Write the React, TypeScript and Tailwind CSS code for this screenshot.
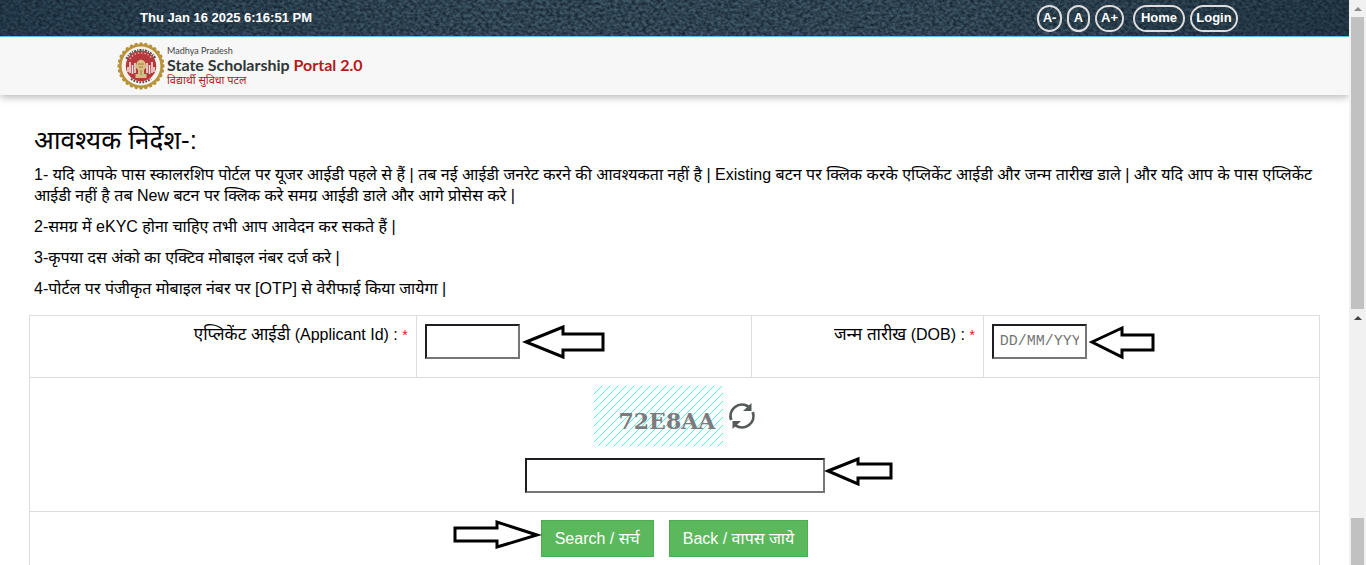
import React from "react";

const latin = "font-['Liberation_Sans','Noto_Sans_Devanagari','Noto_Sans',sans-serif]";
const pill =
  "flex h-[27px] items-center justify-center rounded-full border-2 border-[#dcdcdc] text-[13px] font-bold text-white";
const field =
  "h-[35px] border-2 border-t-[#1d1f23] border-l-[#1d1f23] border-r-[#767676] border-b-[#767676] bg-white px-1.5 font-['Liberation_Mono',monospace] text-[15px] placeholder:text-[#757575]";

function Texture() {
  return (
    <svg className="absolute inset-0 h-full w-full" aria-hidden="true">
      <defs>
        <linearGradient id="slate" x1="0" x2="1" y1="0" y2="0">
          <stop offset="0" stopColor="#2c4658" />
          <stop offset="0.35" stopColor="#415a69" />
          <stop offset="0.7" stopColor="#415a69" />
          <stop offset="1" stopColor="#2a4150" />
        </linearGradient>
        <filter id="grain" x="0" y="0" width="100%" height="100%" colorInterpolationFilters="sRGB">
          <feTurbulence type="fractalNoise" baseFrequency="0.28 0.34" numOctaves="3" seed="7" />
          <feColorMatrix values="0 0 0 0 0.07  0 0 0 0 0.12  0 0 0 0 0.17  1.6 0 0 0 -0.4" />
        </filter>
      </defs>
      <rect width="100%" height="100%" fill="url(#slate)" />
      <rect width="100%" height="100%" filter="url(#grain)" />
    </svg>
  );
}

function Seal() {
  const teeth = Array.from({ length: 28 }, (_, i) => (i * 360) / 28);
  return (
    <svg viewBox="0 0 48 48" className="h-12 w-12 shrink-0" aria-hidden="true">
      {teeth.map((a) => (
        <circle key={a} cx="24" cy="2.2" r="1.9" fill="#b8923a" transform={`rotate(${a} 24 24)`} />
      ))}
      <circle cx="24" cy="24" r="22" fill="#b8923a" />
      <circle cx="24" cy="24" r="19.4" fill="#f6f1ea" />
      <path d="M9.500 17A16.300 16.300 0 0 1 38.500 17" fill="none" stroke="#5b5254" strokeWidth="2.400" strokeDasharray="2.200 1 1.200 1" />
      <path d="M14 36.800A16.300 16.300 0 0 0 34 36.800" fill="none" stroke="#5b5254" strokeWidth="2" strokeDasharray="1.800 1.200" />
      <circle cx="24" cy="24" r="15.200" fill="#b5383c" />
      <path d="M13 17c3-5 7-6 11-6s8 1 11 6" fill="none" stroke="#dca39f" strokeWidth="1.600" strokeDasharray="1.500 1.800" />
      <path d="M11 25v5M13 20v11M15.500 23v9M18 21v10M30 21v10M32.500 23v9M35 20v11M37 25v5" stroke="#f3e2de" strokeWidth="1.600" />
      <path d="M20 20q4-5 8 0l1.500 5-2.500 3v4h2.500v4h-11v-4H21v-4l-2.500-3z" fill="#d8bd86" />
      <path d="M21 22h6M22 25h4M24 28v5" stroke="#a57c3c" strokeWidth="1" />
    </svg>
  );
}

function Arrow({ points, className }: { points: string; className: string }) {
  return (
    <svg className={`absolute overflow-visible ${className}`} aria-hidden="true">
      <polygon points={points} fill="none" stroke="#000" strokeWidth="3" />
    </svg>
  );
}

function Refresh() {
  return (
    <svg viewBox="0 0 28 28" className="h-7 w-7" aria-hidden="true">
      <g fill="none" stroke="#555a57" strokeWidth="2.800">
        <path d="M3.200 18A11.500 11.500 0 0 1 20.500 4.600" />
        <path d="M24.800 10A11.500 11.500 0 0 1 7.500 23.400" />
      </g>
      <path d="M23.500 1v8h-8.500z" fill="#555a57" />
      <path d="M4.500 27v-8h8.500z" fill="#555a57" />
    </svg>
  );
}

function Captcha() {
  return (
    <div className="relative h-[60px] w-[129px]">
      <svg className="absolute inset-0 h-full w-full" aria-hidden="true">
        <defs>
          <pattern id="hatch" width="8" height="8" patternUnits="userSpaceOnUse">
            <rect width="8" height="8" fill="#f8fffd" />
            <path d="M-1 9L9 -1M-1 1L1 -1M7 9L9 7" stroke="#5ff0cf" strokeWidth="1" />
          </pattern>
        </defs>
        <rect width="100%" height="100%" fill="url(#hatch)" />
      </svg>
      <span className="relative block pt-5 pl-[25px] font-['DejaVu_Serif',serif] text-[22px] leading-[30px] font-bold text-[#7d7a80]">
        72E8AA
      </span>
    </div>
  );
}

export default function App() {
  return (
    <div className={`flex h-screen overflow-hidden bg-white text-black ${latin}`}>
      <div className="min-w-0 flex-1">
        <header>
          <div className="relative flex h-[37px] items-center justify-between border-b border-[#5bc0de] bg-[#22343f] pr-[111px] pl-[140px]">
            <Texture />
            <time className="relative text-[13px] font-bold text-white">Thu Jan 16 2025 6:16:51 PM</time>
            <nav className="relative flex items-center gap-[5px]">
              <button className={`${pill} w-[25px]`}>A-</button>
              <button className={`${pill} w-[23px]`}>A</button>
              <button className={`${pill} w-[29px]`}>A+</button>
              <a href="#home" className={`${pill} ml-1 w-[52px]`}>Home</a>
              <a href="#login" className={`${pill} w-12`}>Login</a>
            </nav>
          </div>
          <div className="flex h-[58px] items-center bg-[#f7f7f7] pl-[117px] shadow-[0_2px_8px_rgba(0,0,0,0.3)]">
            <Seal />
            <a href="#portal" className="ml-0.5 block font-['Liberation_Sans_Narrow','Lato','Noto_Sans_Devanagari',sans-serif]">
              <span className="block font-['Lato',sans-serif] text-[9px] leading-3 text-[#444]">Madhya Pradesh</span>
              <span className="block text-base leading-4 font-bold text-[#2f3636]">
                State Scholarship <span className="text-[#b8181c]">Portal 2.0</span>
              </span>
              <span className="block text-[11px] leading-[14px] text-[#b8181c]">विद्यार्थी सुविधा पटल</span>
            </a>
          </div>
        </header>

        <main className="px-[29px]">
          <section className="px-[5px] pt-[29px] text-base leading-[21px]">
            <h1 className="mb-2 text-[26px] leading-8">आवश्यक निर्देश-:</h1>
            <p className="mb-2.5">
              1- यदि आपके पास स्कालरशिप पोर्टल पर यूजर आईडी पहले से हैं | तब नई आईडी जनरेट करने की आवश्यकता नहीं है | Existing बटन पर
              क्लिक करके एप्लिकेंट आईडी और जन्म तारीख डाले | और यदि आप के पास एप्लिकेंट आईडी नहीं है तब New बटन पर क्लिक करे समग्र
              आईडी डाले और आगे प्रोसेस करे |
            </p>
            <p className="mb-2.5">2-समग्र में eKYC होना चाहिए तभी आप आवेदन कर सकते हैं |</p>
            <p className="mb-2.5">3-कृपया दस अंको का एक्टिव मोबाइल नंबर दर्ज करे |</p>
            <p className="mb-4">4-पोर्टल पर पंजीकृत मोबाइल नंबर पर [OTP] से वेरीफाई किया जायेगा |</p>
          </section>

          <form className="border border-[#ddd] text-base" onSubmit={(e) => e.preventDefault()}>
            <div className="grid h-[62px] grid-cols-[30%_26%_18%_26%] border-b border-[#ddd]">
              <label htmlFor="applicant" className="border-r border-[#ddd] px-2 pt-2 text-right leading-[21px]">
                <span className="text-[17px]">एप्लिकेंट आईडी</span> (Applicant Id) : <span className="text-sm text-[#d01818]">*</span>
              </label>
              <div className="relative border-r border-[#ddd] p-2">
                <input id="applicant" type="text" className={`${field} w-[95px]`} />
                <Arrow className="top-2 left-[106px] h-9 w-20" points="3,18 40,3 40,10 80,10 80,26 40,26 40,33" />
              </div>
              <label htmlFor="dob" className="border-r border-[#ddd] px-2 pt-2 text-right leading-[21px]">
                <span className="text-[17px]">जन्म तारीख</span> (DOB) : <span className="text-sm text-[#d01818]">*</span>
              </label>
              <div className="relative p-2">
                <input id="dob" type="text" placeholder="DD/MM/YYY" className={`${field} w-[95px]`} />
                <Arrow className="top-2 left-[103px] h-9 w-16" points="5,18 35,4 35,11 66,11 66,26 35,26 35,33" />
              </div>
            </div>

            <div className="flex h-[134px] flex-col items-center border-b border-[#ddd] pt-2">
              <div className="flex items-center gap-[5px]">
                <Captcha />
                <button type="button" aria-label="Refresh captcha">
                  <Refresh />
                </button>
              </div>
              <div className="relative mt-3">
                <input type="text" aria-label="Captcha" className={`${field} w-[300px]`} />
                <Arrow className="-top-0.5 left-[298px] h-8 w-[70px]" points="5,15 35,3 35,8 68,8 68,22 35,22 35,28" />
              </div>
            </div>

            <div className="flex justify-center gap-[15px] py-2">
              <div className="relative">
                <button className="h-[37px] border border-[#4cae4c] bg-[#5cb85c] px-[13px] text-base text-white">Search / सर्च</button>
                <Arrow className="top-0 -left-[88px] h-8 w-[86px]" points="84,15 44,2 44,8 2,8 2,21 44,21 44,27" />
              </div>
              <button type="button" className="h-[37px] border border-[#4cae4c] bg-[#5cb85c] px-[13px] text-base text-white">
                Back / वापस जाये
              </button>
            </div>
          </form>
        </main>
      </div>

      <div className="relative w-[17px] shrink-0 bg-[#f1f1f1] px-0.5" aria-hidden="true">
        <div className="flex h-[17px] items-center justify-center">
          <svg viewBox="0 0 8 4" className="h-1 w-2"><path d="M0 4L4 0L8 4z" fill="#8b8b8b" /></svg>
        </div>
        <div className="h-[292px] bg-[#c1c1c1]" />
        <div className="flex h-[209px] items-start justify-center pt-[7px]">
          <svg viewBox="0 0 8 4" className="h-1 w-2"><path d="M0 4L4 0L8 4z" fill="#444" /></svg>
        </div>
        <div className="h-[47px] bg-[#c1c1c1]" />
      </div>
    </div>
  );
}
